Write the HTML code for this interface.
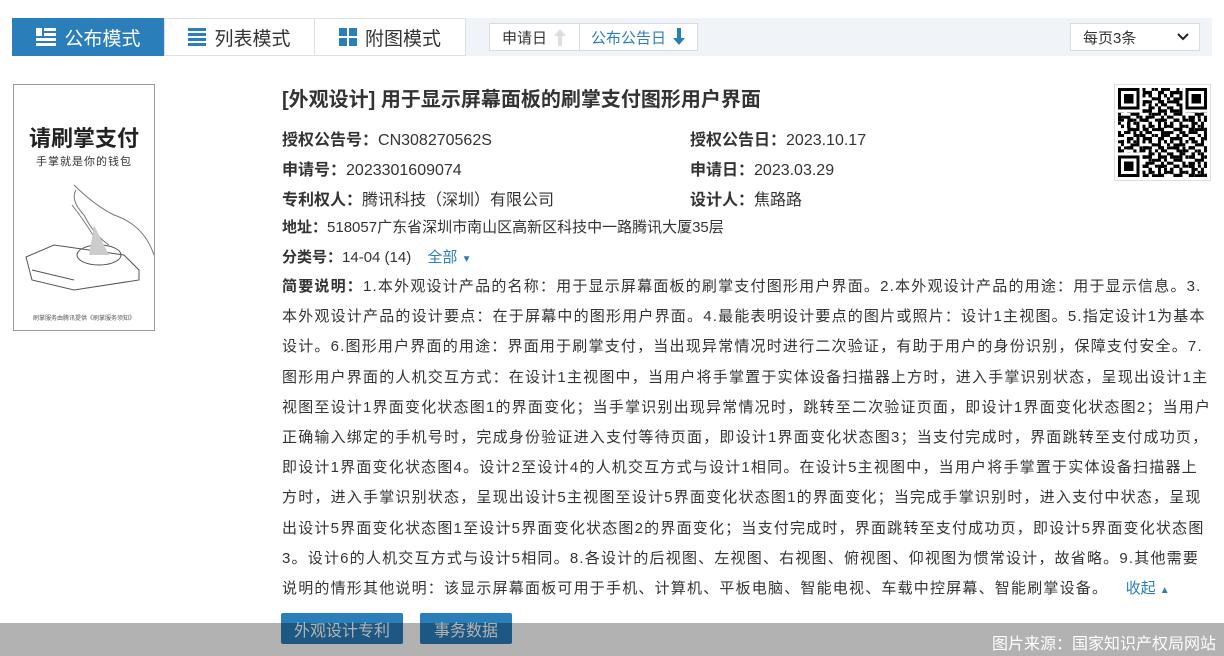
<!DOCTYPE html>
<html><head><meta charset="utf-8"><style>
*{margin:0;padding:0;box-sizing:border-box}
body{width:1224px;height:656px;overflow:hidden;background:#fff;font-family:"Liberation Sans","Noto Sans CJK SC",sans-serif;color:#333;position:relative}
.bar{position:absolute;left:12px;top:18px;width:1200px;height:38px;background:#f0f4f8}
.tab{position:absolute;top:18px;height:38px;border:1px solid #dde2e8;background:#fff;font-size:19px;color:#333;display:flex;align-items:center;justify-content:center;gap:8px}
.tab.on{background:#2a7fba;color:#fff;border-color:#2a7fba}
.sb{position:absolute;top:23px;height:28px;border:1px solid #d8dde3;background:#fff;font-size:15px;display:flex;align-items:center;justify-content:center;gap:6px}
.abs{position:absolute;white-space:nowrap}
.lbl{font-weight:bold}
.f16{font-size:16px}
.desc{position:absolute;left:282px;top:272px;font-size:15px;line-height:30.2px;white-space:nowrap;letter-spacing:1.2px}
.btn{position:absolute;top:613px;height:31px;background:#2a7fba;color:#fff;font-size:16px;border-radius:2px;display:flex;align-items:center;justify-content:center}
.ov{position:absolute;left:0;top:623px;width:1224px;height:33px;background:rgba(0,0,0,0.3)}
</style></head><body>
<div class="bar"></div>
<div class="tab on" style="left:12px;width:153px"><svg width="20" height="18"><rect x="0" y="0" width="6" height="8" fill="#fff"/><rect x="8" y="0" width="12" height="3" fill="#fff"/><rect x="8" y="5" width="12" height="3" fill="#fff"/><rect x="0" y="10" width="20" height="3" fill="#fff"/><rect x="0" y="15" width="20" height="3" fill="#fff"/></svg>公布模式</div>
<div class="tab" style="left:164px;width:151px"><svg width="18" height="18"><rect y="0" width="18" height="3" fill="#2a7fba"/><rect y="5" width="18" height="3" fill="#2a7fba"/><rect y="10" width="18" height="3" fill="#2a7fba"/><rect y="15" width="18" height="3" fill="#2a7fba"/></svg>列表模式</div>
<div class="tab" style="left:314px;width:152px"><svg width="18" height="18"><rect x="0" y="0" width="8" height="8" fill="#2a7fba"/><rect x="10" y="0" width="8" height="8" fill="#2a7fba"/><rect x="0" y="10" width="8" height="8" fill="#2a7fba"/><rect x="10" y="10" width="8" height="8" fill="#2a7fba"/></svg>附图模式</div>
<div class="sb" style="left:489px;width:91px">申请日<svg width="14" height="18"><path d="M7 1 L13 8 H9 V18 H5 V8 H1 Z" fill="#ddd"/></svg></div>
<div class="sb" style="left:579px;width:119px;color:#2a7fba">公布公告日<svg width="14" height="18"><path d="M7 17 L13 10 H9 V0 H5 V10 H1 Z" fill="#2a7fba"/></svg></div>
<div class="sb" style="left:1070px;width:130px;justify-content:space-between;padding:0 10px 0 12px">每页3条<svg width="12" height="8"><path d="M1 1 L6 6 L11 1" stroke="#222" stroke-width="2" fill="none"/></svg></div>

<div style="position:absolute;left:13px;top:84px;width:142px;height:247px;border:1px solid #999;background:#fff">
<div class="abs" style="left:0;width:140px;text-align:center;top:36px;font-size:22px;font-weight:bold;color:#222">请刷掌支付</div>
<div class="abs" style="left:0;width:140px;text-align:center;top:68px;font-size:11px;color:#333;letter-spacing:1px">手掌就是你的钱包</div>
<svg class="abs" style="left:0;top:0" width="140" height="245"><path d="M60 100 Q80 120 100 130 Q130 140 140 170 M62 105 Q56 115 70 130 Q80 150 95 160 M58 120 Q70 135 82 155" stroke="#777" fill="none"/><path d="M12 172 L40 160 L110 170 L125 185 L125 195 L60 205 L18 195 Z" stroke="#555" fill="none"/><ellipse cx="85" cy="170" rx="22" ry="10" stroke="#555" fill="none"/><path d="M80 140 L75 170 L95 170 Z" fill="#ccc"/><line x1="18" y1="185" x2="60" y2="195" stroke="#555"/></svg>
<div class="abs" style="left:0;width:140px;text-align:center;top:228px;font-size:6px;color:#555">刷掌服务由腾讯提供《刷掌服务须知》</div>
</div>

<div class="abs" style="left:282px;top:83px;font-size:20px;font-weight:bold;color:#333">[外观设计] 用于显示屏幕面板的刷掌支付图形用户界面</div>
<div class="abs f16" style="left:282px;top:126px"><span class="lbl">授权公告号：</span>CN308270562S</div>
<div class="abs f16" style="left:282px;top:156px"><span class="lbl">申请号：</span>2023301609074</div>
<div class="abs f16" style="left:282px;top:186px"><span class="lbl">专利权人：</span>腾讯科技（深圳）有限公司</div>
<div class="abs f16" style="left:690px;top:126px"><span class="lbl">授权公告日：</span>2023.10.17</div>
<div class="abs f16" style="left:690px;top:156px"><span class="lbl">申请日：</span>2023.03.29</div>
<div class="abs f16" style="left:690px;top:186px"><span class="lbl">设计人：</span>焦路路</div>
<div class="abs" style="left:282px;top:216px;font-size:15px"><span class="lbl">地址：</span>518057广东省深圳市南山区高新区科技中一路腾讯大厦35层</div>
<div class="abs" style="left:282px;top:246px;font-size:15px"><span class="lbl">分类号：</span>14-04 (14) <span style="color:#2a7fba;margin-left:12px">全部 <span style="font-size:10px">▼</span></span></div>

<div style="position:absolute;left:1114px;top:84px;width:97px;height:97px;border:1px solid #ddd;background:#fff;padding:3px">
<svg width="89" height="89" viewBox="0 0 29 29" shape-rendering="crispEdges">
<defs><pattern id="p" width="7" height="5" patternUnits="userSpaceOnUse"><rect x="0" y="0" width="2" height="1"/><rect x="3" y="1" width="1" height="2"/><rect x="5" y="0" width="1" height="1"/><rect x="1" y="2" width="1" height="1"/><rect x="4" y="3" width="3" height="1"/><rect x="0" y="4" width="1" height="1"/><rect x="6" y="1" width="1" height="2"/><rect x="2" y="4" width="2" height="1"/></pattern>
<pattern id="q" width="5" height="3" patternUnits="userSpaceOnUse"><rect x="1" y="0" width="1" height="1"/><rect x="3" y="1" width="2" height="1"/><rect x="0" y="2" width="1" height="1"/></pattern></defs>
<rect width="29" height="29" fill="url(#p)"/><rect width="29" height="29" fill="url(#q)"/>
<g><rect x="0" y="0" width="8" height="8" fill="#fff"/><rect x="0" y="0" width="7" height="7"/><rect x="1" y="1" width="5" height="5" fill="#fff"/><rect x="2" y="2" width="3" height="3"/>
<rect x="21" y="0" width="8" height="8" fill="#fff"/><rect x="22" y="0" width="7" height="7"/><rect x="23" y="1" width="5" height="5" fill="#fff"/><rect x="24" y="2" width="3" height="3"/>
<rect x="0" y="21" width="8" height="8" fill="#fff"/><rect x="0" y="22" width="7" height="7"/><rect x="1" y="23" width="5" height="5" fill="#fff"/><rect x="2" y="24" width="3" height="3"/></g>
</svg></div>

<div class="desc"><span class="lbl">简要说明：</span>1.本外观设计产品的名称：用于显示屏幕面板的刷掌支付图形用户界面。2.本外观设计产品的用途：用于显示信息。3.<br>本外观设计产品的设计要点：在于屏幕中的图形用户界面。4.最能表明设计要点的图片或照片：设计1主视图。5.指定设计1为基本<br>设计。6.图形用户界面的用途：界面用于刷掌支付，当出现异常情况时进行二次验证，有助于用户的身份识别，保障支付安全。7.<br>图形用户界面的人机交互方式：在设计1主视图中，当用户将手掌置于实体设备扫描器上方时，进入手掌识别状态，呈现出设计1主<br>视图至设计1界面变化状态图1的界面变化；当手掌识别出现异常情况时，跳转至二次验证页面，即设计1界面变化状态图2；当用户<br>正确输入绑定的手机号时，完成身份验证进入支付等待页面，即设计1界面变化状态图3；当支付完成时，界面跳转至支付成功页，<br>即设计1界面变化状态图4。设计2至设计4的人机交互方式与设计1相同。在设计5主视图中，当用户将手掌置于实体设备扫描器上<br>方时，进入手掌识别状态，呈现出设计5主视图至设计5界面变化状态图1的界面变化；当完成手掌识别时，进入支付中状态，呈现<br>出设计5界面变化状态图1至设计5界面变化状态图2的界面变化；当支付完成时，界面跳转至支付成功页，即设计5界面变化状态图<br>3。设计6的人机交互方式与设计5相同。8.各设计的后视图、左视图、右视图、俯视图、仰视图为惯常设计，故省略。9.其他需要<br>说明的情形其他说明：该显示屏幕面板可用于手机、计算机、平板电脑、智能电视、车载中控屏幕、智能刷掌设备。 <span style="color:#2a7fba;margin-left:12px;letter-spacing:0">收起 <span style="font-size:10px">▲</span></span></div>

<div class="btn" style="left:281px;width:122px">外观设计专利</div>
<div class="btn" style="left:420px;width:92px">事务数据</div>
<div class="ov"></div>
<div class="abs" style="right:8px;top:630px;font-size:16px;color:#fff">图片来源：国家知识产权局网站</div>
</body></html>
